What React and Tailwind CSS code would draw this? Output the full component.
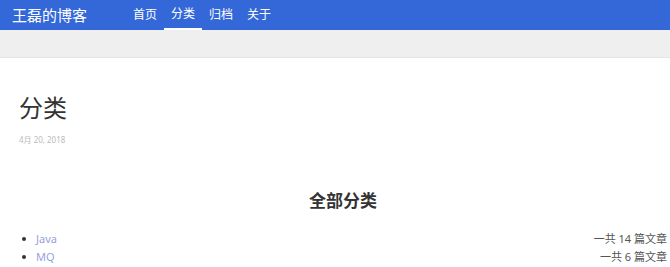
export default function App() {
  const font = { fontFamily: '"Noto Sans", "Noto Sans CJK SC", sans-serif' };
  return (
    <div className="w-[670px] h-[267px] overflow-hidden bg-white" style={font}>
      <header className="h-[30px] bg-[#3468d8] flex items-stretch shadow-[0_1px_2px_rgba(0,0,0,0.3)]">
        <div className="pl-[12px] w-[126px] flex items-center text-white text-[15px] leading-none">王磊的博客</div>
        <nav className="flex items-stretch text-white text-[12px]">
          <a className="px-[7px] flex items-center">首页</a>
          <a className="px-[7px] flex items-center border-b-2 border-white">分类</a>
          <a className="px-[7px] flex items-center">归档</a>
          <a className="px-[7px] flex items-center">关于</a>
        </nav>
      </header>
      <div className="h-[28px] bg-[#efefef] border-b border-[#e4e4e4]"></div>
      <main className="pl-[19px] pr-[3px]">
        <h1 className="mt-[35px] text-[24px] leading-[30px] text-[#333]">分类</h1>
        <div className="mt-[11px] text-[8px] text-[#bbb]">4月 20, 2018</div>
        <h2 className="mt-[43px] text-center text-[17px] font-bold text-[#333] leading-[24px]">全部分类</h2>
        <ul className="mt-[17px] text-[11px] leading-[18px]">
          <li className="flex justify-between">
            <span className="flex items-center"><span className="w-[4px] h-[4px] rounded-full bg-[#333] ml-[3px] mr-[10px]"></span><a className="text-[#9aa0e0]">Java</a></span>
            <span className="text-[#555]">一共 14 篇文章</span>
          </li>
          <li className="flex justify-between">
            <span className="flex items-center"><span className="w-[4px] h-[4px] rounded-full bg-[#333] ml-[3px] mr-[10px]"></span><a className="text-[#9aa0e0]">MQ</a></span>
            <span className="text-[#555]">一共 6 篇文章</span>
          </li>
        </ul>
      </main>
    </div>
  );
}
